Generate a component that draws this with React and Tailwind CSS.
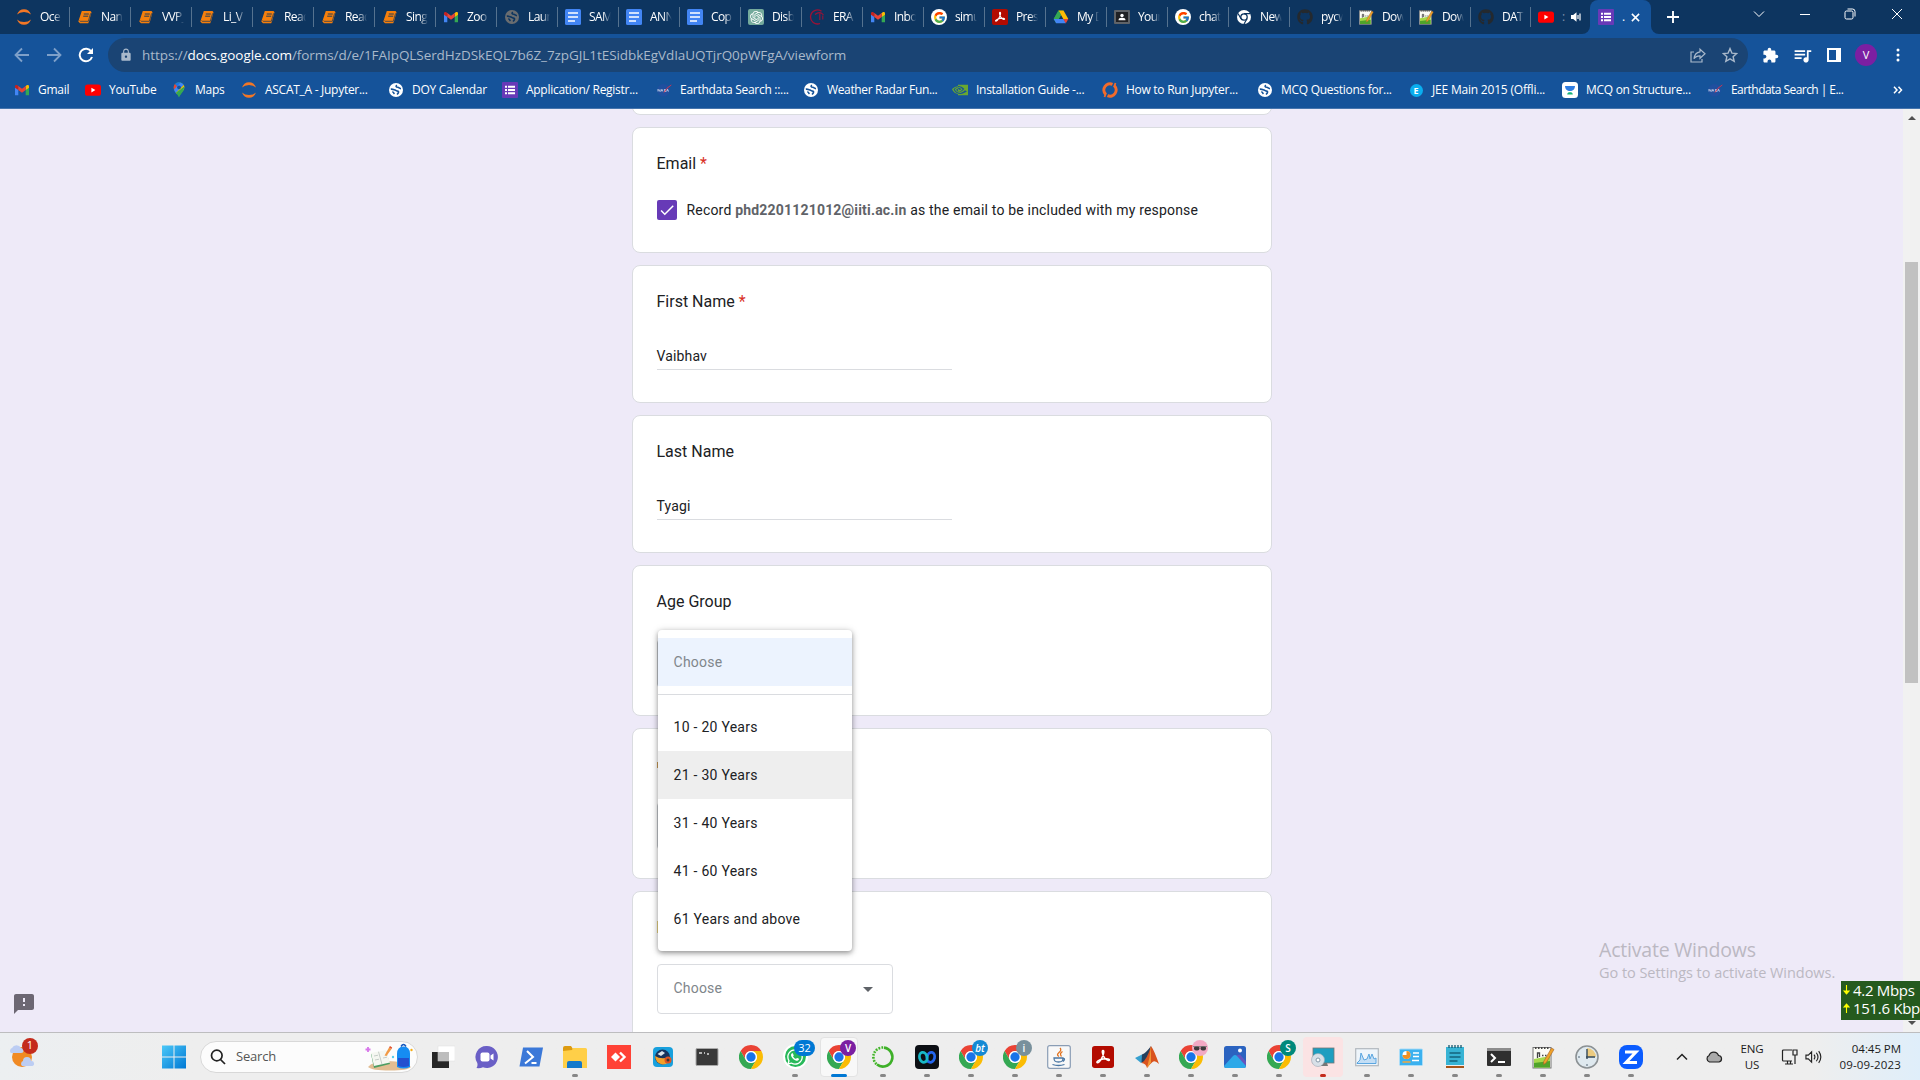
import React from "react";
import { FcGoogle } from "react-icons/fc";
import { FaGithub, FaWhatsapp } from "react-icons/fa";
import { SiOpenai, SiNvidia } from "react-icons/si";
import { MdExtension, MdQueueMusic, MdFeedback, MdCheck, MdLock, MdArrowDropDown } from "react-icons/md";

const UI = "font-['Open_Sans','Noto_Sans',sans-serif]";

/* ---------- favicons ---------- */
const Jupyter = () => (
  <svg viewBox="0 0 16 16" className="size-4">
    <path d="M1 5.600Q3 .3 8 .3T15 5.600Q12.300 3 8 3T1 5.600z" fill="#f37726" />
    <path d="M1 10.400Q3 15.700 8 15.700T15 10.400Q12.300 13 8 13T1 10.400z" fill="#f37726" />
  </svg>
);
const Book = () => (
  <svg viewBox="0 0 16 16" className="size-4">
    <path d="M4.800 2H13.500l1 1.200-2.300 8.600-1 2.400H3L1.300 12.500z" fill="#f57f0c" />
    <path d="M6.800 5h5M6.200 7.200h5" stroke="#0d3560" strokeWidth=".9" />
    <path d="M2.600 11.500l.7.800h8l2.300-8" fill="none" stroke="#0d3560" strokeWidth=".7" />
  </svg>
);
const Gmail = () => (
  <svg viewBox="0 0 16 16" className="size-4">
    <path d="M1 4.500v8.700h3.300V7z" fill="#4285f4" />
    <path d="M15 4.500v8.700h-3.300V7z" fill="#34a853" />
    <path d="M1 4.200v1.600L4.300 8V4.200L3.400 3.300C2.300 2.500 1 3.200 1 4.200z" fill="#c5221f" />
    <path d="M15 4.200v1.600L11.700 8V4.200l.9-.9c1.100-.8 2.400-.1 2.400.9z" fill="#fbbc04" />
    <path d="M4.300 4v4L8 10.800 11.700 8V4L8 6.800z" fill="#ea4335" />
  </svg>
);
const Globe = ({ dim }) => (
  <svg viewBox="0 0 16 16" className="size-4">
    <circle cx="8" cy="8" r="7" fill={dim ? "#6a6d70" : "#fff"} />
    <path d="M2.800 7.200c1.500-.3 2.800.4 4.200.9s1.500.9 2.700 1 1.300 1.700-.7 3.400M8.800 3c-1.500 1.400-.5 2.200 1 2.300s1.200 1.100 3.200 1.300M4.300 9.800c1.200.2 1.700 1 1.900 2.300" fill="none" stroke={dim ? "#0d3560" : "#15539a"} strokeWidth="1.600" />
  </svg>
);
const Docs = () => (
  <svg viewBox="0 0 16 16" className="size-4">
    <rect width="16" height="16" rx="1.500" fill="#4285f4" />
    <path d="M3 4h10M3 8h10M3 12h7" stroke="#fff" strokeWidth="1.700" />
  </svg>
);
const OpenAI = () => (
  <span className="flex size-4 items-center justify-center rounded-[2px] bg-[#74aa9c] text-white"><SiOpenai size={13} /></span>
);
const Era = () => (
  <svg viewBox="0 0 16 16" className="size-4" fill="none" stroke="#9b1236">
    <path d="M12.500 2.200A7 7 0 1 0 11 14.500" strokeWidth="1.300" />
    <path d="M6 5.500Q11 1.500 14.500 6M10.800 4.500v6.500M13.800 6.500v4" strokeWidth="1.100" />
  </svg>
);
const Google = () => (
  <span className="flex size-4 items-center justify-center rounded-full bg-white"><FcGoogle size={13} /></span>
);
const Pdf = ({ size = 16 }) => (
  <svg viewBox="0 0 16 16" width={size} height={size}>
    <rect width="16" height="16" rx="2" fill="#b30b00" />
    <path d="M8 3.200c1.200 0 .4 3.500-1.300 6.300-1 1.700-2.300 3-3 2.600s1-2 4.300-2.600 4.800 0 4.600.7-2.400 0-3.600-1.700S6.900 3.200 8 3.200z" fill="none" stroke="#fff" strokeWidth="1.100" />
  </svg>
);
const Drive = () => (
  <svg viewBox="0 0 16 16" className="size-4">
    <path d="M5.500 1.500h5L8 6z" fill="#188038" />
    <path d="M5.500 1.500L8 6l-4.800 8.200L.7 10z" fill="#34a853" />
    <path d="M10.500 1.500L15.300 10h-5L5.500 1.500z" fill="#fbbc04" />
    <path d="M5.500 1.500L8 6 5.700 10H.7z" fill="#34a853" />
    <path d="M.7 10h10l2.100 4.200H3.200z" fill="#4285f4" />
    <path d="M10.300 10h5l-2.500 4.200z" fill="#ea4335" />
  </svg>
);
const Classroom = () => (
  <svg viewBox="0 0 16 16" className="size-4">
    <rect y="1" width="16" height="14" rx="1" fill="#5f6368" />
    <rect x="2" y="3" width="12" height="10" fill="#202124" />
    <circle cx="8" cy="6.500" r="1.700" fill="#fff" />
    <path d="M4.500 11.200q0-2.400 3.500-2.400t3.500 2.400z" fill="#fff" />
  </svg>
);
const ChromeMono = () => (
  <svg viewBox="0 0 16 16" className="size-4">
    <circle cx="8" cy="8" r="7" fill="#fff" />
    <circle cx="8" cy="8" r="3.200" fill="#fff" stroke="#0d3560" strokeWidth="1.300" />
    <path d="M8 4.600h6.200M5 9.700L2 4.500M11 9.700L8 15" stroke="#0d3560" strokeWidth="1.200" />
  </svg>
);
const Github = () => <FaGithub size={16} color="#24292e" />;
const NotepadPP = ({ size = 16 }) => (
  <svg viewBox="0 0 24 24" width={size} height={size}>
    <rect x="2" y="2.500" width="18" height="20.500" fill="#fbfbf5" stroke="#777" />
    <path d="M3 14l16-3v11.500H3z" fill="#a5d84b" /><path d="M3 18l16-2v6.500H3z" fill="#4fa32a" />
    <path d="M4 3h14" stroke="#444" strokeWidth="2" strokeDasharray="1.500 1.500" />
    <path d="M6.500 13V8h2v4M11 10.500h1.500M14 10.500h1.500" fill="none" stroke="#444" strokeWidth="1.300" />
    <path d="M20.500 3L23 4.500 15 18l-2.500 1.500.2-3z" fill="#f0a229" stroke="#a0622a" strokeWidth=".6" />
  </svg>
);
const YouTube = () => (
  <svg viewBox="0 0 16 16" className="size-4">
    <rect y="2.500" width="16" height="11.300" rx="2.600" fill="#f00" />
    <path d="M6.400 5.700v4.800l4-2.400z" fill="#fff" />
  </svg>
);
const Forms = () => (
  <svg viewBox="0 0 16 16" className="size-4">
    <rect width="16" height="16" rx="1" fill="#673ab7" />
    <path d="M3 4.700h2M3 8h2M3 11.300h2M6 4.700h7M6 8h7M6 11.300h7" stroke="#fff" strokeWidth="2" />
  </svg>
);
const Maps = () => (
  <svg viewBox="0 0 16 16" className="size-4">
    <path d="M8 15.500c-.6-3-5.300-6-5.300-10.200A5.300 5.300 0 0 1 8 .3a5.300 5.300 0 0 1 5.300 5c0 4.200-4.700 7.200-5.300 10.200z" fill="#34a853" />
    <path d="M3 7.500C2.300 5.500 2.800 3.200 4 2l3 2.600z" fill="#ea4335" />
    <path d="M4 2A5.300 5.300 0 0 1 9.500.5L6.500 4.600z" fill="#1a73e8" />
    <path d="M9.500.5a5.300 5.300 0 0 1 3.300 2.600L4.800 11Q3.400 9.200 3 7.500z" fill="#4285f4" />
    <path d="M12.800 3.100c.7 1.400.7 3 0 4.400L8 12.800 4.800 11z" fill="#fbbc04" />
    <path d="M13.200 5.300c0 4.200-4.600 7.200-5.200 10.200-.3-1.600-1.700-3.200-3-4.700l8-6z" fill="#34a853" />
    <circle cx="8" cy="5.300" r="1.900" fill="#15539a" />
  </svg>
);
const Nasa = () => (
  <svg viewBox="0 0 16 16" className="size-4">
    <circle cx="7.500" cy="8.300" r="6.300" fill="#1f4f9f" />
    <path d="M2 9.500V7.300L4 9.500V7.300M5 9.500l.9-2.200.9 2.200M9.800 7.500H8.300v.9h1.400v1.100H8M10.700 9.500l.9-2.200.9 2.200" fill="none" stroke="#d5def0" strokeWidth=".8" />
    <path d="M15.300 3Q10.500 5.500 8 10.500" fill="none" stroke="#e0304a" strokeWidth=".9" />
  </svg>
);
const Nvidia = () => <SiNvidia size={16} color="#69a82f" />;
const OrangeRing = () => (
  <svg viewBox="0 0 16 16" className="size-4" fill="none" stroke="#f26b2b" strokeWidth="3">
    <path d="M3.600 12.300A6.200 6.200 0 0 1 10.500 2.300M12.400 3.700A6.200 6.200 0 0 1 5.500 13.700" />
    <path d="M2.500 15l1.500-4M13.500 1L12 5" strokeWidth="1.800" />
  </svg>
);
const EBlue = () => (
  <span className="flex size-4 items-center justify-center">
    <span className="flex size-[13px] items-center justify-center rounded-full bg-[#0aaeef] text-[9px] font-bold leading-none text-white">E</span>
  </span>
);
const Unacademy = () => (
  <svg viewBox="0 0 16 16" className="size-4">
    <rect width="16" height="16" rx="3.500" fill="#fff" />
    <path d="M3 4h10c0 3-2.200 5-5 5S3 7 3 4z" fill="#2f7de1" />
    <path d="M5.200 12.500c0-1.700 1.200-2.300 2.800-2.300s2.800.6 2.800 2.300z" fill="#14b277" />
  </svg>
);

const tabs = [
  [Jupyter, "Oce"], [Book, "Nan"], [Book, "VVP_"], [Book, "Li_V"], [Book, "Read"], [Book, "Read"], [Book, "Sing"],
  [Gmail, "Zoo"], [() => <Globe dim />, "Laun"], [Docs, "SAM"], [Docs, "ANN"], [Docs, "Cop"], [OpenAI, "Disb"], [Era, "ERA"],
  [Gmail, "Inbo"], [Google, "simu"], [Pdf, "Pres"], [Drive, "My D"], [Classroom, "Your"], [Google, "chat"],
  [ChromeMono, "New"], [Github, "pycw"], [NotepadPP, "Dow"], [NotepadPP, "Dow"], [Github, "DAT"],
];

const bookmarks = [
  [Gmail, "Gmail", 71], [YouTube, "YouTube", 86], [Maps, "Maps", 70], [Jupyter, "ASCAT_A - Jupyter...", 147],
  [Globe, "DOY Calendar", 114], [Forms, "Application/ Registr...", 154], [Nasa, "Earthdata Search ::...", 147],
  [Globe, "Weather Radar Fun...", 149], [Nvidia, "Installation Guide -...", 150], [OrangeRing, "How to Run Jupyter...", 155],
  [Globe, "MCQ Questions for...", 151], [EBlue, "JEE Main 2015 (Offli...", 154], [Unacademy, "MCQ on Structure...", 145],
  [Nasa, "Earthdata Search | E...", 161],
];

function TabStrip() {
  return (
    <div className="flex h-[34px] bg-[#0d3560] pl-[9px] text-white">
      {tabs.map(([Icon, label], i) => (
        <div key={i} className={`flex h-full shrink-0 items-center pl-[7px] ${i < 22 ? "w-[61px]" : "w-[60px]"}`}>
          <Icon />
          <span className="ml-2 w-[22px] overflow-hidden whitespace-nowrap text-[12px] leading-4 tracking-[-0.6px] [mask-image:linear-gradient(to_right,black_62%,transparent_100%)]">{label}</span>
          <span className="ml-auto h-5 w-px bg-[#55728f]" />
        </div>
      ))}
      <div className="flex h-full w-[59px] shrink-0 items-center pl-[7px]">
        <YouTube />
        <span className="ml-2 w-2 text-[12px] text-[#7f93aa]">:</span>
        <svg viewBox="0 0 12 12" className="size-3">
          <path d="M1 4h2.200L6.500 1.200v9.600L3.200 8H1z" fill="#fff" />
          <path d="M8 4v4M10 2.500v7" stroke="#fff" strokeWidth="1.200" fill="none" />
        </svg>
      </div>
      <div className="-ml-2 flex h-full items-end">
        <div className="h-2 w-2 bg-[#15539a]"><div className="size-full rounded-br-[8px] bg-[#0d3560]" /></div>
        <div className="flex h-[34px] w-[61px] items-center rounded-t-[8px] bg-[#15539a] pl-2">
          <Forms />
          <span className="ml-2 w-[7px] text-[12px]">.</span>
          <svg viewBox="0 0 10 10" className="ml-0.5 size-[9px]" stroke="#fff" strokeWidth="1.700"><path d="M1 1l8 8M9 1L1 9" /></svg>
        </div>
        <div className="h-2 w-2 bg-[#15539a]"><div className="size-full rounded-bl-[8px] bg-[#0d3560]" /></div>
      </div>
      <svg viewBox="0 0 12 12" className="ml-[8px] mt-[11px] size-3" stroke="#fff" strokeWidth="1.900"><path d="M6 0v12M0 6h12" /></svg>
      <div className="ml-auto flex h-7 items-center">
        <svg viewBox="0 0 12 12" className="mr-[34px] size-3" fill="none" stroke="#fff" strokeWidth="1"><path d="M1 3.500l5 5 5-5" /></svg>
        <svg viewBox="0 0 12 12" className="mr-[33px] size-3" stroke="#fff" strokeWidth="1"><path d="M1 6.500h10" /></svg>
        <svg viewBox="0 0 12 12" className="mr-[35px] size-3" fill="none" stroke="#fff" strokeWidth="1">
          <rect x="1" y="3" width="8" height="8" rx="1.500" /><path d="M3.500 1h5a2.500 2.500 0 0 1 2.500 2.500v5" />
        </svg>
        <svg viewBox="0 0 12 12" className="mr-[17px] size-3" stroke="#fff" strokeWidth="1"><path d="M1 1l10 10M11 1L1 11" /></svg>
      </div>
    </div>
  );
}

function Toolbar() {
  return (
    <div className="flex h-[42px] items-center bg-[#15539a]">
      <svg viewBox="0 0 16 16" className="ml-[14px] size-4" fill="none" stroke="#7ea0c9" strokeWidth="1.800"><path d="M15 8H2M8 1.500L1.500 8 8 14.500" /></svg>
      <svg viewBox="0 0 16 16" className="ml-4 size-4" fill="none" stroke="#7ea0c9" strokeWidth="1.800"><path d="M1 8h13M8 1.500L14.500 8 8 14.500" /></svg>
      <svg viewBox="0 0 16 16" className="ml-4 size-4" fill="none" stroke="#fff" strokeWidth="2"><path d="M13.300 4.500A6.300 6.300 0 1 0 14 10" /><path d="M15 1v6H9z" fill="#fff" stroke="none" /></svg>
      <div className="ml-[14px] flex h-[34px] w-[1640px] items-center rounded-full bg-[#1a4474] text-[#a9b9cb]">
        <MdLock size={14} className="ml-[11px]" />
        <span className="ml-[9px] whitespace-nowrap text-[13.500px] tracking-[-0.065px]">https://<span className="text-white">docs.google.com</span>/forms/d/e/1FAIpQLSerdHzDSkEQL7b6Z_7zpGJL1tESidbkEgVdIaUQTjrQ0pWFgA/viewform</span>
        <svg viewBox="0 0 16 16" className="ml-auto mr-4 size-4" fill="none" stroke="#a9b9cb" strokeWidth="1.200">
          <path d="M4 5H1v10h11v-3" /><path d="M10 2.200l5 4.600-5 4.500V8.800c-3 0-4.800 1-6 3 .3-3.600 2.300-6.400 6-7z" />
        </svg>
        <svg viewBox="0 0 16 16" className="mr-[10px] size-4" fill="none" stroke="#a9b9cb" strokeWidth="1.400"><path d="M8 1.600l1.900 4.500 4.800.4-3.600 3.200 1.100 4.700L8 11.900l-4.200 2.500 1.100-4.700L1.300 6.500l4.800-.4z" /></svg>
      </div>
      <MdExtension size={17} color="#fff" className="ml-[14px]" />
      <MdQueueMusic size={21} color="#fff" className="ml-[13px]" />
      <svg viewBox="0 0 14 14" className="ml-[14px] size-[14px]"><path d="M0 0h14v14H0z" fill="#fff" /><path d="M2 2h7v10H2z" fill="#15539a" /></svg>
      <span className="ml-[14px] flex size-[22px] items-center justify-center rounded-full bg-[#7b1fa2] text-[11px] text-white">V</span>
      <svg viewBox="0 0 4 14" className="ml-[19px] h-[14px] w-1" fill="#fff"><circle cx="2" cy="2" r="1.500" /><circle cx="2" cy="7" r="1.500" /><circle cx="2" cy="12" r="1.500" /></svg>
    </div>
  );
}

function Bookmarks() {
  return (
    <div className="flex h-[33px] items-center border-b border-[#4675ad] bg-[#15539a] pb-1 pl-[14px] text-[12px] text-white">
      {bookmarks.map(([Icon, label, w], i) => (
        <div key={i} className={`flex shrink-0 items-center gap-2 whitespace-nowrap ${i === 13 ? "tracking-[-0.55px]" : i === 7 ? "tracking-[-0.35px]" : i === 11 ? "tracking-[-0.2px]" : "tracking-[-0.28px]"}`} style={{ width: w }}>
          <Icon /><span>{label}</span>
        </div>
      ))}
      <svg viewBox="0 0 10 8" className="ml-[25px] h-2 w-[10px]" fill="none" stroke="#fff" strokeWidth="1.500"><path d="M1 .8L4 4 1 7.200M5.500 .8l3 3.200-3 3.200" /></svg>
    </div>
  );
}

/* ---------- form ---------- */
const CARD = "shrink-0 rounded-[8px] border border-[#dadce0] bg-white px-6 text-[#202124]";

const Title = ({ children, required }) => (
  <div className="pt-6 text-[16px] leading-6">
    {children}{required && <span className="text-[#d93025]"> *</span>}
  </div>
);

const TextCard = ({ title, value, required }) => (
  <div className={`${CARD} h-[138px]`}>
    <Title required={required}>{title}</Title>
    <div className="mt-[30px] h-[26px] w-[295px] border-b border-[#dadce0] text-[14px] leading-6 tracking-[0.15px]">{value}</div>
  </div>
);

const options = ["10 - 20 Years", "21 - 30 Years", "31 - 40 Years", "41 - 60 Years", "61 Years and above"];

function Menu() {
  return (
    <div className="absolute left-0 top-[-10px] z-10 w-[194px] rounded-[4px] bg-white py-2 text-[14px] tracking-[0.27px] shadow-[0_2px_5px_rgba(0,0,0,0.35),0_1px_8px_rgba(0,0,0,0.15)]">
      <div className="flex h-12 items-center bg-[#ecf3fe] px-4 text-[#80868b]">Choose</div>
      <div className="mb-2 mt-2 h-px bg-[#dadce0]" />
      {options.map((o) => (
        <div key={o} className={`flex h-12 items-center px-4 ${o.startsWith("21") ? "bg-[#eee]" : ""}`}>{o}</div>
      ))}
    </div>
  );
}

function FormPage() {
  return (
    <div className="flex h-[923px] overflow-hidden bg-[#eeeaf8] font-[Roboto,sans-serif]">
      <div className="flex w-[631.5px] shrink-0 items-end">
        <MdFeedback size={24} color="#6c6773" className="mb-4 ml-3" />
      </div>
      <div className="flex w-[640px] shrink-0 flex-col gap-3">
        <div className="h-[6px] shrink-0 overflow-hidden"><div className={`${CARD} -mt-5 h-[26px]`} /></div>
        <div className={`${CARD} h-[126px]`}>
          <Title required>Email</Title>
          <div className="mt-6 flex items-center gap-[10px] text-[14px] leading-5">
            <span className="flex size-5 items-center justify-center rounded-[2px] bg-[#673ab7] text-white"><MdCheck size={18} /></span>
            <span className="whitespace-nowrap tracking-[0.19px]">Record <b className="font-bold text-[#5f6368]">phd2201121012@iiti.ac.in</b> as the email to be included with my response</span>
          </div>
        </div>
        <TextCard title="First Name" value="Vaibhav" required />
        <TextCard title="Last Name" value="Tyagi" />
        <div className={`${CARD} h-[151px]`}>
          <Title>Age Group</Title>
          <div className="relative mt-[25px] h-[49px] w-[195px] rounded-[4px] border border-[#bfc3c9]"><Menu /></div>
        </div>
        <div className={`${CARD} h-[151px]`}>
          <div className="mt-[33px] h-[6px] w-px bg-[#c99a55]" />
          <div className="mt-[34px] h-[48px] w-[180px] rounded-[4px] border border-[#c4c7cc]" />
        </div>
        <div className={`${CARD} h-[170px]`}>
          <div className="mt-[29px] h-3 w-px bg-[#e6d382]" />
          <div className="mt-[31px] flex h-[50px] w-[236px] items-center justify-between rounded-[4px] border border-[#dadce0] pl-4 pr-3 text-[14px] tracking-[0.2px] text-[#80868b]">
            <span className="-mt-0.5">Choose</span><MdArrowDropDown size={24} color="#5f6368" />
          </div>
        </div>
      </div>
      <div className={`${UI} flex flex-1 flex-col items-end justify-end text-[#bbb8c2]`}>
        <div className="mb-[49px] mr-[68px] w-[236px] whitespace-nowrap">
          <div className="text-[19.500px] leading-[27px] tracking-[-0.2px]">Activate Windows</div>
          <div className="text-[14.500px] leading-5 tracking-[-0.04px]">Go to Settings to activate Windows.</div>
        </div>
      </div>
      <div className="flex w-[17px] shrink-0 flex-col items-center bg-[#f1f1f1] pt-[7px]">
        <div className="border-x-[4px] border-b-[4px] border-x-transparent border-b-[#505050]" />
        <div className="mt-[142px] h-[421px] w-[13px] bg-[#c1c1c1]" />
        <div className="mb-[7px] mt-auto border-x-[4px] border-t-[4px] border-x-transparent border-t-[#505050]" />
      </div>
    </div>
  );
}

/* ---------- taskbar ---------- */
const Chrome = ({ badge, className = "" }) => (
  <span className="relative flex">
    <svg viewBox="0 0 48 48" className="size-6">
      <path fill="#ea4335" d="M24 12h20.780A24 24 0 0 0 3.210 12l10.400 18A12 12 0 0 1 24 12z" />
      <path fill="#34a853" d="M3.210 12l10.400 18a12 12 0 0 0 20.780 0L24 48A24 24 0 0 1 3.210 12z" />
      <path fill="#fbbc04" d="M44.780 12H24a12 12 0 0 1 10.390 18L24 48a24 24 0 0 0 20.780-36z" />
      <circle cx="24" cy="24" r="12" fill="#fff" /><circle cx="24" cy="24" r="9.300" fill="#1a73e8" />
    </svg>
    {badge && <span className={`absolute -right-[5px] -top-[5px] flex size-4 items-center justify-center rounded-full text-[10px] font-semibold leading-none text-white ${className}`}>{badge}</span>}
  </span>
);
const Glasses = () => (
  <svg viewBox="0 0 16 16" className="size-4">
    <rect x="2" y="6" width="5.500" height="4.500" rx="2" fill="#3d3a3c" /><rect x="8.500" y="6" width="5.500" height="4.500" rx="2" fill="#3d3a3c" />
    <path d="M1 6.500h14" stroke="#777" strokeWidth=".8" />
  </svg>
);
const S = ({ children }) => <svg viewBox="0 0 24 24" className="size-6">{children}</svg>;

const apps = [
  { icon: <S><rect x="1" y="7" width="17" height="16" fill="#262626" /><rect x="7" y="1" width="17" height="15" fill="#fff" stroke="#ddd" strokeWidth=".5" /><path d="M7 7h11v9H7z" fill="#bdbdbd" /></S> },
  { icon: <S><path d="M12 1a11 11 0 1 1-4 21.300Q5 23.500 1.500 23q1.500-2 .8-5A11 11 0 0 1 12 1z" fill="#6a5fc6" /><rect x="5.500" y="7.500" width="9" height="9" rx="2" fill="#fff" /><path d="M15.500 10.500l3-2v7l-3-2z" fill="#fff" /></S> },
  { icon: <S><path d="M4 2.500h20l-3.500 19H.5z" fill="#3b78d8" /><path d="M8 6l6 6-8 6.500M12.500 18h5" fill="none" stroke="#fff" strokeWidth="2" /></S> },
  { icon: <S><path d="M0 3q0-2 2-2h6l2 3v5H0z" fill="#dd9b10" /><path d="M0 6l9-1 1-2h12.500q1.500 0 1.500 1.500V23H0z" fill="#ffcf48" /><path d="M4 23v-5q0-2 2-2h11q2 0 2 2v5z" fill="#1479cb" /></S>, dot: 1 },
  { icon: <S><path d="M0 0h24v24H0z" fill="#ff4236" /><path d="M8.500 7.500L13 12l-4.500 4.500L4 12z" fill="#fff" /><path d="M13 7.500l4.500 4.500-4.500 4.500" fill="none" stroke="#fff" strokeWidth="2.400" /></S> },
  { icon: <S><rect x="2" y="2" width="20" height="20" rx="4" fill="#18a0dd" /><circle cx="11.500" cy="12" r="7.500" fill="#17345e" /><path d="M4 11q6 4 15 1-1 8-7.500 7.500Q4.500 18.500 4 11z" fill="#f2a129" /><circle cx="17" cy="15" r="3.500" fill="#df5321" /><circle cx="17" cy="15" r="1.500" fill="#3c3835" /><path d="M6.500 9l4.500-3 3 2-4 3z" fill="#dbe4ea" /></S> },
  { icon: <S><rect x="1" y="3.500" width="22" height="17" rx="1" fill="#393939" stroke="#aaa" /><path d="M4 8h3M9 8h1M12 9h2" stroke="#ddd" strokeWidth="1.300" /></S> },
  { icon: <Chrome /> },
  { icon: <span className="relative flex size-6 items-center justify-center"><span className="flex size-[25px] shrink-0 items-center justify-center rounded-full bg-white"><span className="flex size-[21px] items-center justify-center rounded-full bg-[#28b95a] text-white"><FaWhatsapp size={18} /></span></span><span className="absolute -right-[8px] -top-[5px] flex h-4 w-[21px] items-center justify-center rounded-full bg-[#0078d4] text-[11px] leading-none text-white">32</span></span>, dot: 1 },
  { icon: <Chrome badge="V" className="bg-[#7b1fa2]" />, dot: 2 },
  { icon: <S><circle cx="12" cy="12" r="9.500" fill="none" stroke="#ccebbd" strokeWidth="2" /><path d="M13 2.600A9.500 9.500 0 1 1 6 19.500" fill="none" stroke="#3eb029" strokeWidth="2.600" /><path d="M12 2.500A9.500 9.500 0 0 0 6 19.500" fill="none" stroke="#3eb029" strokeWidth="2.600" strokeDasharray="1.500 1.500" /></S>, dot: 1 },
  { icon: <S><rect width="24" height="24" rx="4" fill="#0c0f14" /><ellipse cx="15.800" cy="12.300" rx="3.800" ry="5" fill="none" stroke="#2467f0" strokeWidth="2.800" transform="rotate(14 15.800 12.300)" /><ellipse cx="8.300" cy="12.300" rx="3.800" ry="5" fill="none" stroke="#18b9c8" strokeWidth="2.800" transform="rotate(-14 8.300 12.300)" /></S>, dot: 1 },
  { icon: <Chrome badge="bt" className="bg-[#1489d4] italic" />, dot: 1 },
  { icon: <Chrome badge="i" className="bg-[#78909c]" />, dot: 1 },
  { icon: <S><rect x=".7" y=".7" width="22.600" height="22.600" rx="2" fill="#f8f8f8" stroke="#8a9db5" strokeWidth="1.200" /><path d="M13 3q2 2-1 4.500t0 4M15.500 6.500q-3.500 2-1 5" fill="none" stroke="#e2711d" strokeWidth="1.300" /><path d="M7 13h9c0 3-1 4-4.500 4S7 16 7 13zM16 13.500q3 0 0 3M5.500 19.500q6 2 12 0" fill="none" stroke="#4b77a4" strokeWidth="1.300" /></S>, dot: 1 },
  { icon: <Pdf size={22} />, dot: 1 },
  { icon: <S><path d="M0 13l7-3.500 4 4-5 4.500z" fill="#37a0cf" /><path d="M7 9.500Q11 8 16 1l-2 11-4 5-3.500.8z" fill="#24405e" /><path d="M16 1q3 4 8 18-4-4-6.500-2T12 23q-1-4.500-5.500-5Q12 15 16 1z" fill="#d9531e" /><path d="M16 1q-1 11-4 22 2-2 4-5.500z" fill="#ef9837" /></S>, dot: 1 },
  { icon: <Chrome badge={<Glasses />} className="bg-[#f2a9c4]" />, dot: 1 },
  { icon: <S><rect x="1" y="1" width="22" height="22" rx="2.500" fill="#2b63c0" /><path d="M13 10.500l4-1 6 7V21z" fill="#6655be" /><path d="M1 21l9-10q2-2 4 0l9 10q0 2-2 2H3q-2 0-2-2z" fill="#2da8e8" /><circle cx="17" cy="5.500" r="2" fill="#fff" /></S>, dot: 1 },
  { icon: <Chrome badge="S" className="bg-[#00897b]" />, dot: 1 },
  { icon: <S><rect x="2" y="3" width="21" height="15" fill="#1d9ec0" stroke="#777" strokeWidth=".8" /><path d="M10 18h6l1 3h-7z" fill="#777" /><circle cx="7" cy="15" r="6.500" fill="#d8e0e8" stroke="#9ba8b4" strokeWidth=".6" /><circle cx="7" cy="15" r="2" fill="#fff" stroke="#8497a8" /></S>, dot: 3 },
  { icon: <S><rect x=".7" y="3.700" width="22.600" height="17" fill="#eef5fb" stroke="#b1b8be" strokeWidth="1.200" /><path d="M2 18l3-3 1-7 3 7 3-1 2-5 1 5 2-5 2 5 2-1v5.500H2z" fill="#c3def5" stroke="#5aa6e0" /></S>, dot: 1 },
  { icon: <S><rect x=".5" y="4" width="23" height="16.500" rx="1" fill="#3bb1ef" stroke="#aaddf8" /><circle cx="7.500" cy="10" r="4" fill="#fff" /><path d="M7.500 10V6a4 4 0 1 1-4 4z" fill="#f09125" /><path d="M14 8h6M14 11.500h6M13 15.500h7" stroke="#fff" strokeWidth="1.500" /><path d="M3.500 17h8" stroke="#f5a93c" strokeWidth="1.500" /></S>, dot: 1 },
  { icon: <S><rect x="3" y="2" width="18" height="18" fill="#37b3d4" /><path d="M3 21h18v2H3z" fill="#a85419" /><path d="M6 0v3M9 0v3M12 0v3M15 0v3M18 0v3" stroke="#15586e" strokeWidth="1.300" /><path d="M6.500 8h11M6.500 12h11M6.500 16h8" stroke="#14647c" strokeWidth="1.500" /></S>, dot: 1 },
  { icon: <S><rect y="3" width="24" height="18" rx="1" fill="#2f2f2f" /><path d="M0 3h24v3H0z" fill="#8c8c8c" /><path d="M4 9l4 4-4 4M11 17h7" fill="none" stroke="#fff" strokeWidth="2" /></S>, dot: 1 },
  { icon: <NotepadPP size={24} />, dot: 1 },
  { icon: <S><circle cx="12" cy="12" r="11" fill="#dfe9ef" stroke="#8b9194" strokeWidth="1.600" /><path d="M12 12V3a9 9 0 0 1 9 9z" fill="#eccb80" /><path d="M12 4v10M11 12h9" stroke="#34495a" strokeWidth="1.400" /><path d="M12 21v-2M3 12h2" stroke="#567" /></S>, dot: 1 },
  { icon: <S><rect width="24" height="24" rx="8" fill="#0b5cff" /><path d="M6 7h11L7 17.500h11" fill="none" stroke="#fff" strokeWidth="3" /></S>, dot: 1 },
];

const dots = { 1: "w-[6px] bg-[#868686]", 2: "w-4 bg-[#0078d4]", 3: "w-[6px] bg-[#c42b1c]" };

function Taskbar() {
  return (
    <div className="flex h-12 items-center border-t border-[#bdbdbf] bg-gradient-to-r from-[#eceff1] via-[#eeeeee] via-10% to-[#eeeeee] text-[#1b1b1b]">
      <div className="w-[162px] shrink-0 pl-[9px]">
        <div className="relative -mt-1 size-7">
          <svg viewBox="0 0 28 28" className="size-7">
            <circle cx="13" cy="16" r="10" fill="#f08a24" />
            <path d="M2 12a3 3 0 0 1 1-5 5 5 0 0 1 9 0 2.500 2.500 0 0 1 0 5z" fill="#bccdf3" />
            <path d="M13 25a3 3 0 0 1 1-5 4 4 0 0 1 8 0 2.500 2.500 0 0 1 1 5z" fill="#bccdf3" />
          </svg>
          <span className="absolute -right-px -top-[3px] flex size-4 items-center justify-center rounded-full bg-[#c42b1c] text-[11px] text-white">1</span>
        </div>
      </div>
      <svg viewBox="0 0 24 24" className="size-[24px] shrink-0">
        <defs><linearGradient id="win" x1="0" y1="0" x2="1" y2="1"><stop offset="0" stopColor="#4cc8f8" /><stop offset="1" stopColor="#0078d4" /></linearGradient></defs>
        <path d="M0 .5h11.500V11.500H0zM12.500 .5H24V11.500H12.500zM0 12.500h11.500v11H0zM12.500 12.500H24v11H12.500z" fill="url(#win)" />
      </svg>
      <div className="ml-[14px] flex h-8 w-[218px] shrink-0 items-center rounded-full border border-[#d8d8d8] bg-[#fcfcfc] pl-[9px]">
        <svg viewBox="0 0 16 16" className="size-4" fill="none" stroke="#222" strokeWidth="1.700"><circle cx="6.800" cy="6.500" r="5.300" /><path d="M10.500 10.500l4.500 4.500" /></svg>
        <span className="ml-[10px] text-[13px] tracking-[-0.2px] text-[#555]">Search</span>
        <svg viewBox="0 0 48 30" className="ml-auto mr-1 h-[30px] w-12">
          <path d="M3 25q4-6 20-6t23 6q-3 3.500-21 3.500T3 25z" fill="#e2bd92" />
          <path d="M6 12l15-3 4 13-16 4z" fill="#4d9d62" /><path d="M6 11l15-3 4 12.500-16 3.500z" fill="#f5f7f1" />
          <path d="M13.500 9.700l3.500 12.600M9 14l4-.8M10 18l4-.8M18 16l4-.8" stroke="#b9c2bc" strokeWidth=".8" />
          <path d="M19.500 13.500l4.500-8 2.500 1.500-5 7z" fill="#f29a45" /><path d="M24 5.500l1-1.500 2.200 1.500-.7 1.500z" fill="#e2532f" />
          <path d="M32 12q0-7.500 6.500-7.500T45 12v13q-6.500 3-13 0z" fill="#168cf2" /><path d="M33 16h11v8q-5.500 2-11 0z" fill="#2350cf" /><path d="M36 4.500q2.500-4 5 0" fill="none" stroke="#1456bd" strokeWidth="1.500" />
          <path d="M3 5v5M.5 7.500h5" stroke="#d876ea" strokeWidth="1.800" /><circle cx="46.500" cy="8" r="1.200" fill="#f6ad13" /><circle cx="28" cy="15" r="1.200" fill="#55cdec" />
        </svg>
      </div>
      <div className="ml-[3px] flex shrink-0">
        {apps.map((a, i) => (
          <div key={i} className={`relative flex h-11 w-11 items-center justify-center ${i === 9 ? "before:absolute before:inset-x-[3px] before:inset-y-[2px] before:rounded-[4px] before:border before:border-[#e3e3e3] before:bg-[#f8f8f8]" : i === 20 ? "before:absolute before:inset-x-[2px] before:inset-y-[2px] before:rounded-[4px] before:bg-[#fbe3e4]" : ""}`}>
            <span className="relative flex">{a.icon}</span>
            {a.dot && <span className={`absolute bottom-[2px] h-[3px] rounded-full ${dots[a.dot]}`} />}
          </div>
        ))}
      </div>
      <div className="flex h-full flex-1 items-center bg-gradient-to-r from-[#eeeeee] from-60% to-[#dfeefa]">
        <svg viewBox="0 0 12 8" className="ml-[23px] h-2 w-3" fill="none" stroke="#222" strokeWidth="1.500"><path d="M1 6.500l5-5 5 5" /></svg>
        <svg viewBox="0 0 18 12" className="ml-[17px] h-3 w-[18px]"><path d="M4.500 11a3.500 3.500 0 0 1-.5-6.500 5 5 0 0 1 9.500 0A3.300 3.300 0 0 1 14 11z" fill="#aaa" stroke="#222" strokeWidth="1.200" /></svg>
        <div className="ml-[13px] w-8 text-center text-[11.500px] leading-4 tracking-[-0.1px]">ENG<br />US</div>
        <svg viewBox="0 0 18 18" className="ml-[13px] size-[18px]" fill="none" stroke="#222" strokeWidth="1.200"><path d="M11 2H2.500Q1.500 2 1.500 3v9q0 1 1 1H11M4 16h8M6.500 13v3M9.500 13v3M12 2h4v5h-4zM14 7v9" /></svg>
        <svg viewBox="0 0 18 16" className="ml-[6px] h-4 w-[17px]" fill="none" stroke="#222" strokeWidth="1.200"><path d="M1 6h2.500L7 2.500v11L3.500 10H1zM9.500 5.500q2 2.500 0 5M12 3.500q3.500 4.500 0 9M14.500 1.800q4.500 6.200 0 12.400" /></svg>
        <div className="ml-auto mr-[19px] whitespace-nowrap text-right text-[11.500px] leading-4 tracking-[0.15px]"><span className="tracking-[-0.05px]">04:45 PM</span><br />09-09-2023</div>
      </div>
    </div>
  );
}

export default function App() {
  return (
    <div className={`${UI} relative h-[1080px] w-[1920px] overflow-hidden`}>
      <TabStrip />
      <Toolbar />
      <Bookmarks />
      <FormPage />
      <Taskbar />
      <div className="absolute right-0 top-[981px] z-20 h-[39px] w-[79px] overflow-hidden whitespace-nowrap bg-[#255a1e] pl-[2px] text-[15px] leading-[18px] tracking-[-0.3px] text-white">
        {[["M3.500 0v8M1 6l2.500 3L6 6z", "4.2 Mbps"], ["M3.500 2v8M1 4l2.500-3L6 4z", "151.6 Kbps"]].map(([d, t]) => (
          <div key={t} className="flex items-center gap-[3px]">
            <svg viewBox="0 0 7 10" className="h-[10px] w-[7px] shrink-0" fill="#ff0" stroke="#ff0" strokeWidth="1.100"><path d={d} /></svg>{t}
          </div>
        ))}
      </div>
    </div>
  );
}
